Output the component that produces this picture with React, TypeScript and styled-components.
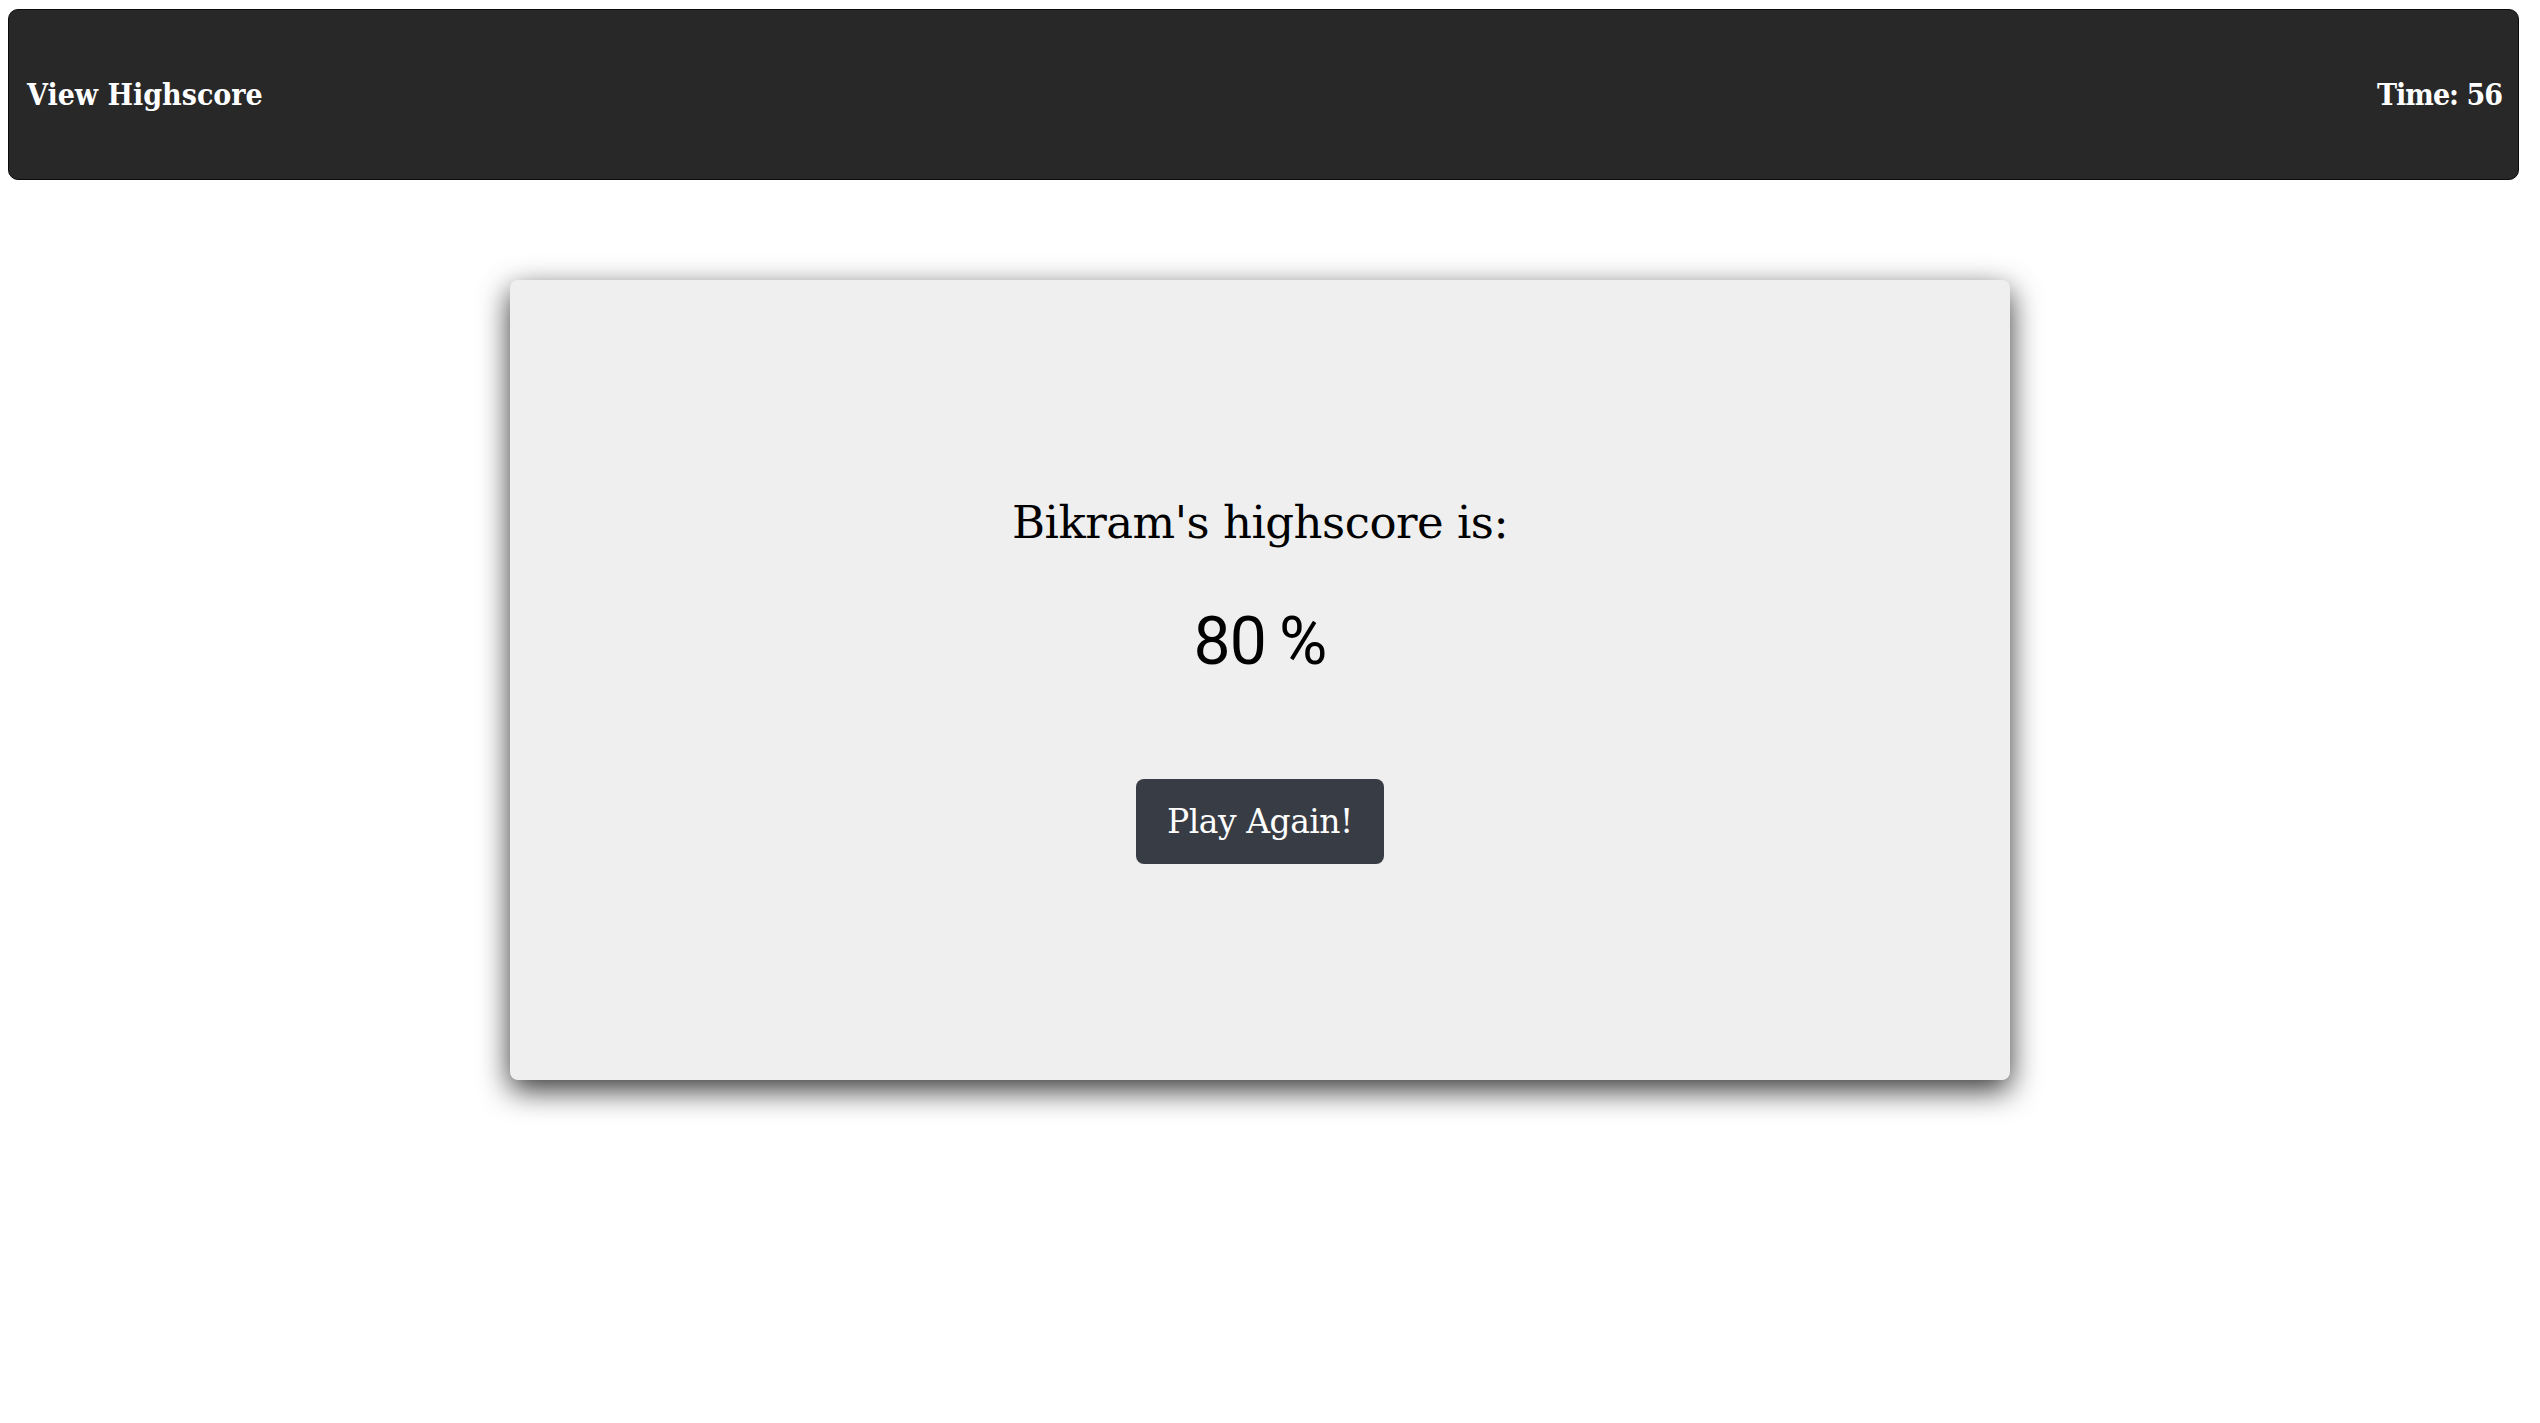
import { createGlobalStyle, styled } from 'styled-components';

const GlobalStyle = createGlobalStyle`
    body {
        margin: 8px;
        background: #ffffff;
        font-family: "DejaVu Serif", "Liberation Serif", serif;
    }
`;

const Page = styled.div`
    width: 2511px;
    min-height: 1400px;
`;

const Header = styled.header`
    height: 169px;
    box-sizing: content-box;
    margin-top: 1px;
    background: #282828;
    border: 1px solid #0c0c0c;
    border-radius: 10px;
    display: flex;
    align-items: center;
    justify-content: space-between;
    padding: 0 16px 0 18px;
    color: #ffffff;
    font-family: "DejaVu Serif Condensed", "DejaVu Serif", serif;
    font-size: 30px;
    font-weight: bold;
`;

const HeaderLink = styled.a`
    color: inherit;
    text-decoration: none;
    cursor: pointer;
`;

const Timer = styled.span`
    letter-spacing: -1px;
`;

const Card = styled.main`
    width: 1500px;
    height: 800px;
    margin: 100px 0 0 502px;
    background: #efefef;
    border-radius: 8px;
    box-shadow: 0 10px 30px rgba(0, 0, 0, 0.8);
    display: flex;
    flex-direction: column;
    align-items: center;
    justify-content: center;
`;

const Title = styled.h2`
    margin: 0;
    font-size: 45px;
    font-weight: normal;
    line-height: 1.2;
    letter-spacing: -0.5px;
    color: #000000;
`;

const Score = styled.p`
    margin: 52px 0 0;
    font-family: Roboto, "Noto Sans", sans-serif;
    font-size: 66px;
    line-height: 1.2;
    letter-spacing: -1px;
    word-spacing: -2px;
    color: #000000;
`;

const Button = styled.button`
    margin-top: 98px;
    width: 248px;
    height: 85px;
    border: none;
    border-radius: 8px;
    background: #383c45;
    color: #ffffff;
    font-family: inherit;
    font-size: 33px;
    letter-spacing: -0.5px;
    cursor: pointer;
`;

export default function App() {
    return (
        <>
            <GlobalStyle />
            <Page>
                <Header>
                    <HeaderLink>View Highscore</HeaderLink>
                    <Timer>Time: 56</Timer>
                </Header>
                <Card>
                    <Title>Bikram's highscore is:</Title>
                    <Score>80 %</Score>
                    <Button>Play Again!</Button>
                </Card>
            </Page>
        </>
    );
}
